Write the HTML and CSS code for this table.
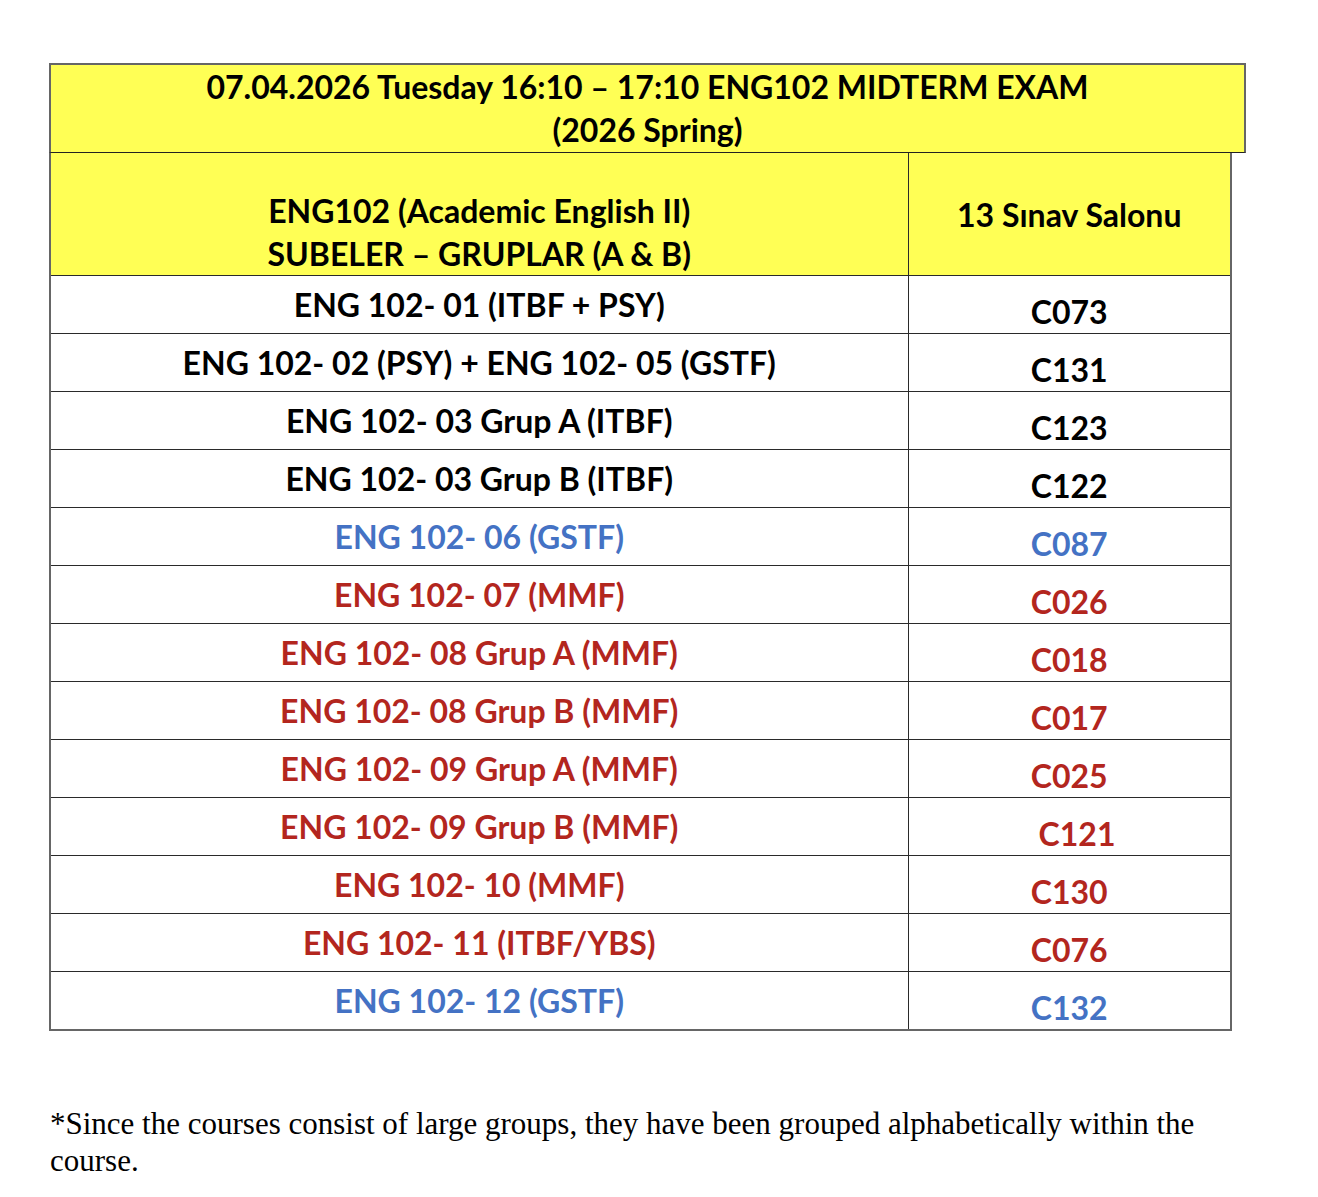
FILE: index.html
```html
<!DOCTYPE html>
<html lang="en">
<head>
<meta charset="utf-8">
<title>ENG102 Midterm Exam</title>
<link rel="stylesheet" href="styles.css">
</head>
<body>
<div class="page">
  <div class="title">
    <div>07.04.2026 Tuesday 16:10 – 17:10 ENG102 MIDTERM EXAM</div>
    <div>(2026 Spring)</div>
  </div>
  <table class="grid">
    <colgroup><col class="c-group"><col class="c-room"></colgroup>
    <thead>
      <tr class="head">
        <th class="h-group">ENG102 (Academic English II)<br>SUBELER – GRUPLAR (A &amp; B)</th>
        <th class="h-room">13 Sınav Salonu</th>
      </tr>
    </thead>
    <tbody>
      <tr><td class="grp">ENG 102- 01 (ITBF + PSY)</td><td class="room">C073</td></tr>
      <tr><td class="grp">ENG 102- 02 (PSY) + ENG 102- 05 (GSTF)</td><td class="room">C131</td></tr>
      <tr><td class="grp">ENG 102- 03 Grup A (ITBF)</td><td class="room">C123</td></tr>
      <tr><td class="grp">ENG 102- 03 Grup B (ITBF)</td><td class="room">C122</td></tr>
      <tr class="blue"><td class="grp">ENG 102- 06 (GSTF)</td><td class="room">C087</td></tr>
      <tr class="red"><td class="grp">ENG 102- 07 (MMF)</td><td class="room">C026</td></tr>
      <tr class="red"><td class="grp">ENG 102- 08 Grup A (MMF)</td><td class="room">C018</td></tr>
      <tr class="red"><td class="grp">ENG 102- 08 Grup B (MMF)</td><td class="room">C017</td></tr>
      <tr class="red"><td class="grp">ENG 102- 09 Grup A (MMF)</td><td class="room">C025</td></tr>
      <tr class="red"><td class="grp">ENG 102- 09 Grup B (MMF)</td><td class="room">&nbsp;&nbsp;C121</td></tr>
      <tr class="red"><td class="grp">ENG 102- 10 (MMF)</td><td class="room">C130</td></tr>
      <tr class="red"><td class="grp">ENG 102- 11 (ITBF/YBS)</td><td class="room">C076</td></tr>
      <tr class="blue"><td class="grp">ENG 102- 12 (GSTF)</td><td class="room">C132</td></tr>
    </tbody>
  </table>
  <p class="note">*Since the courses consist of large groups, they have been grouped alphabetically within the course.</p>
</div>
</body>
</html>
```
FILE: styles.css
```css
html, body {
  margin: 0;
  padding: 0;
  background: #ffffff;
}

.page {
  padding: 63px 0 0 49px;
  width: 1197px;
  font-family: "Lato", "Open Sans", sans-serif;
  font-weight: 700;
  font-size: 32px;
  color: #000;
}

.title {
  box-sizing: border-box;
  width: 1197px;
  height: 90px;
  background: #ffff55;
  border: 2px solid #666;
  border-bottom: 1px solid #222;
  text-align: center;
  line-height: 43px;
  padding-top: 0;
}

.grid {
  width: 1181px;
  border-collapse: collapse;
  table-layout: fixed;
  border: 2px solid #666;
  border-top: none;
}

.c-group { width: 858px; }
.c-room { width: 323px; }

.grid th,
.grid td {
  border: 1px solid #2a2a2a;
  padding: 0;
  text-align: center;
  line-height: 43px;
  font-weight: 700;
}

.grid tr > :first-child { border-left: 2px solid #666; }
.grid tr > :last-child { border-right: 2px solid #666; }
.grid tbody tr:last-child td { border-bottom: 2px solid #666; }

.head th {
  height: 122px;
  background: #ffff55;
  border-top: none;
}

.h-group { vertical-align: bottom; }
.h-room { vertical-align: middle; }

.grid tbody td { height: 57px; }

.grp { vertical-align: middle; padding-bottom: 0; }
.room { vertical-align: bottom; }

.blue td { color: #4472c4; }
.red td { color: #b3261e; }

.note {
  margin: 74px 0 0 1px;
  width: 1181px;
  font-family: "Liberation Serif", "Times New Roman", serif;
  font-weight: 400;
  font-size: 31px;
  line-height: 37px;
}
```
